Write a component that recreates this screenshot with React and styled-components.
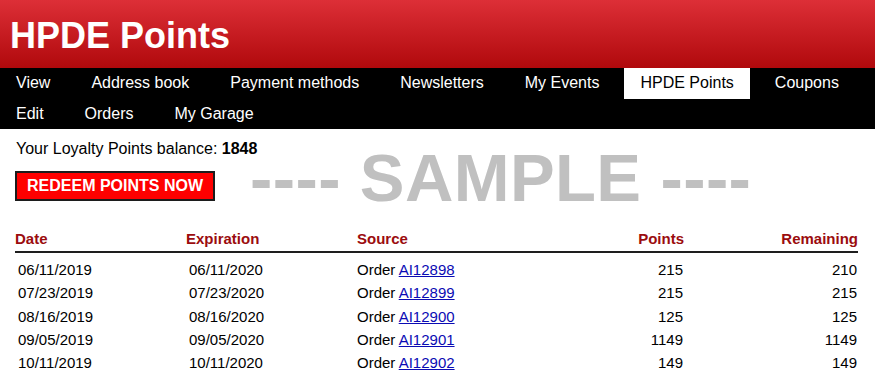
import React from "react";
import styled, { createGlobalStyle } from "styled-components";

const Global = createGlobalStyle`
  html, body { margin: 0; padding: 0; background: #fff; }
  body { font-family: "Liberation Sans", Arial, Helvetica, sans-serif; color: #000; }
`;

const Header = styled.header`
  height: 68px;
  box-sizing: border-box;
  padding: 4px 0 0 10px;
  background: linear-gradient(#dd2f37, #b0090c);
`;

const Title = styled.h1`
  margin: 0;
  font-size: 36px;
  line-height: 64px;
  font-weight: 700;
  color: #fff;
`;

const Nav = styled.nav`
  background: #000;
  display: flex;
  flex-wrap: wrap;
  column-gap: 9px;
`;

const NavItem = styled.a`
  display: block;
  padding: 0 16px;
  line-height: 30.5px;
  font-size: 16px;
  color: ${(p) => (p.$active ? "#000" : "#fff")};
  background: ${(p) => (p.$active ? "#fff" : "transparent")};
  text-decoration: none;
  white-space: nowrap;
`;

const Content = styled.main`
  position: relative;
  padding: 11px 17px 0 15px;
`;

const Balance = styled.p`
  margin: 0 0 0 1px;
  font-size: 16px;
  line-height: 18.4px;
`;

const RedeemButton = styled.button`
  margin-top: 13px;
  height: 30px;
  width: 200px;
  box-sizing: border-box;
  padding: 0 10px;
  background: #ff0000;
  border: 2px solid #1c1c1c;
  color: #fff;
  font-family: inherit;
  font-size: 16px;
  font-weight: 700;
  cursor: pointer;
`;

const Watermark = styled.div`
  position: absolute;
  left: 250px;
  top: 30px;
  font-size: 67px;
  line-height: 38px;
  font-weight: 700;
  letter-spacing: 0.4px;
  color: #c0c0c0;
  white-space: pre;
  pointer-events: none;
`;

const Table = styled.table`
  margin-top: 25.5px;
  width: 843px;
  border-collapse: collapse;
  font-size: 15px;
  line-height: 17.25px;
`;

const Th = styled.th`
  padding: 3px 0 4px;
  text-align: ${(p) => p.$align || "left"};
  color: #9b0c0e;
  font-weight: 700;
  border-bottom: 2px solid #1e1e1e;
`;

const Row = styled.tr`
  &:first-child td { padding-top: 8px; }
`;

const Td = styled.td`
  padding: 3px ${(p) => (p.$align === "right" ? "1px" : "0")} 3px ${(p) => p.$inset || "0"};
  text-align: ${(p) => p.$align || "left"};
  color: #000;
`;

const OrderLink = styled.a`
  color: #0b0bb4;
  text-decoration: underline;
`;

const navRows = [
  "View",
  "Address book",
  "Payment methods",
  "Newsletters",
  "My Events",
  "HPDE Points",
  "Coupons",
  "Edit",
  "Orders",
  "My Garage",
];

const rows = [
  ["06/11/2019", "06/11/2020", "AI12898", "215", "210"],
  ["07/23/2019", "07/23/2020", "AI12899", "215", "215"],
  ["08/16/2019", "08/16/2020", "AI12900", "125", "125"],
  ["09/05/2019", "09/05/2020", "AI12901", "1149", "1149"],
  ["10/11/2019", "10/11/2020", "AI12902", "149", "149"],
];

export default function App() {
  return (
    <>
      <Global />
      <Header>
        <Title>HPDE Points</Title>
      </Header>
      <Nav>
        {navRows.map((n) => (
          <NavItem key={n} href="#" $active={n === "HPDE Points"}>
            {n}
          </NavItem>
        ))}
      </Nav>
      <Content>
        <Balance>
          Your Loyalty Points balance: <b>1848</b>
        </Balance>
        <RedeemButton>REDEEM POINTS NOW</RedeemButton>
        <Watermark>---- SAMPLE ----</Watermark>
        <Table>
          <colgroup>
            <col style={{ width: 171 }} />
            <col style={{ width: 171 }} />
            <col style={{ width: 171 }} />
            <col style={{ width: 156 }} />
            <col style={{ width: 174 }} />
          </colgroup>
          <thead>
            <tr>
              <Th>Date</Th>
              <Th>Expiration</Th>
              <Th>Source</Th>
              <Th $align="right">Points</Th>
              <Th $align="right">Remaining</Th>
            </tr>
          </thead>
          <tbody>
            {rows.map((r) => (
              <Row key={r[2]}>
                <Td $inset="3px">{r[0]}</Td>
                <Td $inset="3px">{r[1]}</Td>
                <Td>
                  Order <OrderLink href="#">{r[2]}</OrderLink>
                </Td>
                <Td $align="right">{r[3]}</Td>
                <Td $align="right">{r[4]}</Td>
              </Row>
            ))}
          </tbody>
        </Table>
      </Content>
    </>
  );
}
